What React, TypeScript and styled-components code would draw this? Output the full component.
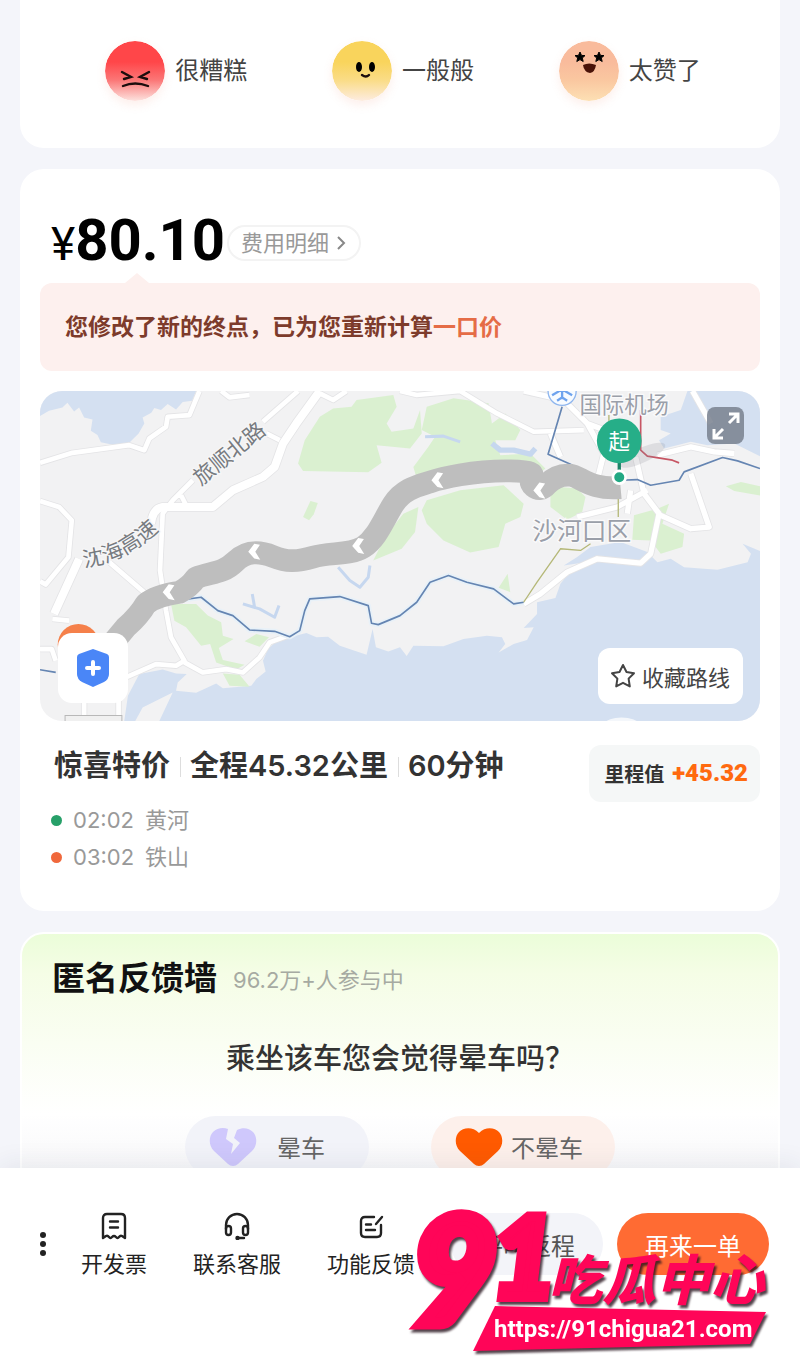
import React from "react";
import styled, { createGlobalStyle } from "styled-components";

const GlobalStyle = createGlobalStyle`
  * {
    box-sizing: border-box;
  }
  body {
    margin: 0;
    background: #f4f5fa;
    color: #333;
    font-family: Inter, "Noto Sans CJK SC", sans-serif;
  }
  button {
    border: 0;
    padding: 0;
    background: none;
    color: inherit;
    font: inherit;
    cursor: pointer;
  }
  h2, p, ul {
    margin: 0;
    padding: 0;
  }
`;

const Screen = styled.div`
  height: 100vh;
  display: flex;
  flex-direction: column;
`;

const Content = styled.main`
  flex: 1;
  min-height: 0;
  padding: 0 20px;
  display: flex;
  flex-direction: column;
  gap: 21px;
  overflow-y: auto;
  scrollbar-width: none;
`;

const Card = styled.section`
  flex: none;
  padding: 38px 20px 35px;
  border-radius: 24px;
  background: #fff;
`;

/* ---------- rating ---------- */
const RatingCard = styled(Card)`
  padding: 41px 37px 47px 43px;
  border-radius: 0 0 24px 24px;
  display: grid;
  grid-template-columns: repeat(3, 1fr);
`;

const RatingButton = styled.button`
  display: flex;
  align-items: center;
  justify-content: center;
  gap: 10px;
  font-size: 24px;
  line-height: 60px;
  color: #444;
  svg {
    border-radius: 50%;
    box-shadow: 0 4px 10px rgba(240, 150, 120, 0.15);
  }
`;

/* ---------- price ---------- */
const PriceRow = styled.div`
  padding: 0 11px;
  display: flex;
  align-items: flex-end;
  gap: 2px;
`;

const Price = styled.p`
  display: flex;
  align-items: baseline;
  font-family: Roboto, sans-serif;
  font-size: 58px;
  line-height: 66px;
  font-weight: 700;
  color: #000;
  small {
    font-size: 46px;
    line-height: 50px;
    font-weight: 400;
  }
`;

const DetailButton = styled.button`
  height: 36px;
  margin-bottom: 12px;
  padding: 0 12px;
  display: flex;
  align-items: center;
  gap: 6px;
  border: 2px solid #f3f3f3;
  border-radius: 18px;
  font-size: 22px;
  line-height: 32px;
  color: #999;
`;

const Notice = styled.p`
  position: relative;
  margin-top: 10px;
  padding: 0 25px;
  border-radius: 12px;
  background: #fdf0ee;
  font-size: 23px;
  line-height: 88px;
  font-weight: 700;
  color: #7d3b2b;
  &::before {
    content: "";
    position: absolute;
    left: 85px;
    top: -10px;
    border: 12px solid transparent;
    border-top-width: 0;
    border-bottom: 10px solid #fdf0ee;
  }
  em {
    font-style: normal;
    color: #e56c46;
  }
`;

/* ---------- map ---------- */
const MapBox = styled.div`
  position: relative;
  margin-top: 20px;
  border-radius: 22px;
  overflow: hidden;
  > svg {
    display: block;
    width: 100%;
  }
`;

const MapButton = styled.button`
  position: absolute;
  display: flex;
  align-items: center;
  justify-content: center;
  background: #fff;
`;

const SafetyButton = styled(MapButton)`
  left: 18px;
  bottom: 18px;
  width: 70px;
  height: 70px;
  border-radius: 14px;
`;

const ExpandButton = styled(MapButton)`
  right: 16px;
  top: 16px;
  width: 37px;
  height: 37px;
  border-radius: 8px;
  background: rgba(120, 128, 142, 0.85);
`;

const FavouriteButton = styled(MapButton)`
  right: 17px;
  bottom: 17px;
  height: 56px;
  padding: 0 13px 0 12px;
  gap: 6px;
  border-radius: 12px;
  font-size: 22px;
  color: #444;
`;

/* ---------- trip ---------- */
const TripRow = styled.div`
  margin-top: 24px;
  padding-left: 14px;
  display: flex;
  justify-content: space-between;
`;

const TripSummary = styled.ul`
  display: flex;
  list-style: none;
  font-size: 29px;
  line-height: 42px;
  font-weight: 600;
  li + li {
    margin-left: 10px;
    padding-left: 10px;
    background: linear-gradient(#ddd, #ddd) 0 12px / 1px 20px no-repeat;
  }
`;

const Mileage = styled.p`
  height: 57px;
  padding: 0 12px 0 15px;
  display: flex;
  align-items: center;
  gap: 8px;
  border-radius: 12px;
  background: #f5f7f7;
  font-size: 20px;
  font-weight: 700;
  strong {
    font-family: Roboto, sans-serif;
    font-size: 24px;
    font-weight: 900;
    color: #ff6a10;
  }
`;

const Stops = styled.ul`
  padding-left: 11px;
  list-style: none;
  font-size: 22px;
  line-height: 37px;
  color: #999;
  li {
    display: flex;
    align-items: center;
    gap: 11px;
  }
`;

const Dot = styled.i<{ $color: string }>`
  width: 11px;
  height: 11px;
  border-radius: 50%;
  background: ${({ $color }) => $color};
`;

/* ---------- feedback ---------- */
const FeedbackCard = styled(Card)`
  padding: 20px 30px 40px;
  border: 2px solid #fff;
  background: linear-gradient(#ebfdd9, #f5fde6 40px, #fff 180px, #f8f8fa 234px);
`;

const FeedbackTitle = styled.div`
  display: flex;
  align-items: center;
  gap: 16px;
  font-size: 22px;
  color: #a6aaa2;
  h2 {
    font-size: 33px;
    line-height: 48px;
    font-weight: 700;
    color: #111;
  }
`;

const Question = styled.p`
  margin-top: 35px;
  font-size: 29px;
  line-height: 44px;
  font-weight: 500;
  text-align: center;
`;

const Answers = styled.div`
  margin-top: 35px;
  display: flex;
  justify-content: center;
  gap: 62px;
`;

const Answer = styled.button<{ $tint: string; $gap: number }>`
  width: 184px;
  height: 62px;
  padding-left: 24px;
  display: flex;
  align-items: center;
  gap: ${({ $gap }) => $gap}px;
  border-radius: 31px;
  background: ${({ $tint }) => $tint};
  font-size: 24px;
  color: #666;
`;

/* ---------- bottom bar ---------- */
const BottomBar = styled.footer`
  position: relative;
  flex: none;
  padding: 40px 31px 85px;
  display: flex;
  align-items: center;
  justify-content: space-between;
  background: #fff;
  box-shadow: 0 -4px 24px rgba(40, 50, 80, 0.08);
`;

const Tools = styled.nav`
  padding-top: 4px;
  display: flex;
  align-items: center;
  gap: 46px;
`;

const MoreButton = styled.button`
  width: 24px;
  height: 60px;
  margin-right: -20px;
`;

const Tool = styled.button`
  display: flex;
  flex-direction: column;
  align-items: center;
  gap: 8px;
  font-size: 22px;
  line-height: 32px;
  color: #222;
`;

const Actions = styled.div`
  display: flex;
  gap: 14px;
`;

const Action = styled.button<{ $primary?: boolean }>`
  width: 152px;
  height: 62px;
  border-radius: 31px;
  background: ${({ $primary }) => ($primary ? "#ff6b33" : "#f3f4f9")};
  color: ${({ $primary }) => ($primary ? "#fff" : "#555")};
  font-size: 24px;
`;

const SiteBadge = styled.svg`
  position: absolute;
  right: 20px;
  bottom: 6px;
  pointer-events: none;
  filter: drop-shadow(2px 3px 1px rgba(40, 20, 30, 0.8));
`;

const ink = { fill: "none", stroke: "#1c0d0d", strokeWidth: 2.4, strokeLinecap: "round" as const };

interface FaceProps {
  id: string;
  from: string;
  mid: string;
  to: string;
  children: React.ReactNode;
}
const Face: React.FC<FaceProps> = ({ id, from, mid, to, children }) => (
  <svg width="60" height="60" viewBox="0 0 60 60" aria-hidden="true">
    <linearGradient id={id} x1="0" y1="0" x2="0" y2="1">
      <stop offset="0.35" stopColor={from} />
      <stop offset="0.65" stopColor={mid} />
      <stop offset="1" stopColor={to} />
    </linearGradient>
    <circle cx="30" cy="30" r="30" fill={`url(#${id})`} />
    {children}
  </svg>
);

const star = "M0-5 1.5-1.6 5-1.4 2.3 1 3.2 4.5 0 2.6-3.2 4.5-2.3 1-5-1.4-1.5-1.6Z";

const ROUTE =
  "M215 830 290 740Q330 705 350 670 380 645 450 635 480 620 500 592C540 575 580 580 615 545S690 512 730 528 800 545 850 530 960 525 1000 500 1060 420 1090 372 1170 315 1200 305 1330 270 1440 272 1480 290 1510 318Q1530 335 1550 312C1570 292 1590 282 1620 285S1680 330 1770 322";

const RouteMap = () => (
  <svg viewBox="33 33 2154 987" role="img" aria-label="路线地图">
    <path fill="#f2f2f3" d="M33 33H2187V1020H33Z" />
    <g fill="#d4e0f1">
      <path d="M33 33H500L488 62 460 66 440 88 415 72 395 90 375 84 366 98 340 112 345 130 328 160 300 188 262 196 215 186 205 165 185 152 190 118 165 112 150 82 135 94 115 68 100 82 60 92 33 108Z" />
      <path d="M285 1020 296 945 330 880 400 866 440 878 472 880 445 905 440 930 500 936 560 908 580 922 665 915 680 895 708 872 700 840 715 805 745 778 830 757 860 770 895 768 930 795 1010 822 1028 745 1038 800 1075 812 1110 800 1130 826 1150 795 1240 797 1300 775 1370 765 1415 770 1425 790 1405 815 1450 790 1490 778 1510 740 1480 742 1520 700 1520 665 1575 652 1590 610 1610 585 1665 545 1600 555 1640 530 1680 500 1770 485 1850 515 1880 545 1920 535 1960 560 2060 568 2150 545 2160 520 2135 490 2187 512V1020H390L430 935 340 980 318 1020Z" />
      <path d="M1970 33H2187V228L2110 190 2030 195 1980 185 1900 205 1885 180 1920 160 1890 150 1890 110 1950 90Z" />
    </g>
    <g fill="#daf0d0">
      <path d="M820 272 805 250 825 180 870 110 910 85 965 80 980 60 1090 45 1100 80 1070 130 1085 155 1150 145 1170 90 1175 160 1140 205 1040 195 1055 248 1015 276Z" />
      <path d="M1190 80 1270 55 1375 70 1385 130 1425 100 1470 150 1455 180 1395 180 1410 225 1500 220 1545 265 1500 300 1160 295 1150 260 1195 200 1215 170 1175 150Z" />
      <path d="M1175 390 1190 360 1290 330 1420 315 1480 370 1470 410 1425 430 1405 500 1320 516 1240 480 1190 430Z" />
      <path d="M1030 540 1065 470 1120 400 1165 380 1155 455 1115 505Z" />
      <path d="M1560 340 1590 320 1640 325 1665 350 1655 395 1610 418 1560 380Z" />
      <path d="M1810 405 1880 385 1915 370 1895 430 1960 460 1955 500 1890 520 1860 480 1805 478Z" />
      <path d="M2085 318 2130 305 2187 318V346L2110 332Z" />
      <path d="M820 410 842 362 864 368 852 402 838 420Z" />
      <path d="M425 670 500 670 535 705 575 725 580 765 612 775 568 802 580 838 645 852 620 866 560 845 542 790 515 795 470 740 435 720Z" />
      <path d="M645 782 680 760 718 770 690 798ZM580 878 630 882 660 918 600 915ZM1405 622 1432 580 1440 635Z" />
    </g>
    <g fill="none" stroke="#c6d7ef" strokeWidth="9" strokeLinejoin="round">
      <path d="M925 560 960 600 990 620 1015 590 1020 555M640 670 690 685 735 710 748 675M668 640 675 680M1185 170 1240 168 1290 185" />
      <path strokeWidth="16" d="M1385 190 1410 210 1450 210 1500 222 1515 205" />
    </g>
    {[
      { stroke: "#e4e4e6", extra: 5 },
      { stroke: "#fff", extra: 0 },
    ].map(({ stroke, extra }) => (
      <g key={stroke} fill="none" stroke={stroke} strokeLinejoin="round">
        <path
          strokeWidth={24 + extra}
          d="M870 33 800 130 760 190 735 260 700 290 610 330 550 380H400Q370 385 365 430M150 535 75 700"
        />
        <path
          strokeWidth={14 + extra}
          d="M33 248 130 218 300 195 345 210 360 175 410 140 415 110 480 105 510 33M33 362 90 380 128 420 118 530 50 612 33 602M805 33 700 125M490 300 430 360 400 400 392 570 410 690 425 770 465 840 440 855 380 850 290 890M455 345 470 375M240 545 350 640M70 715 120 720M710 160 750 180M465 845 520 875 590 865 640 875 690 830 720 785 775 765M575 33 600 52 660 45M870 40 910 60 950 33M1110 33 1160 45 1290 33 1400 100 1510 155 1660 150M33 805 68 805 80 840M165 960V1020M268 960V1010"
        />
        <path
          strokeWidth={16 + extra}
          d="M1480 33 1600 60 1670 130 1720 220 1700 300M1670 130 1750 160M1815 230 1840 340 1885 400 1860 520 1830 548 1700 535 1610 575 1530 640 1480 670M1985 33 2040 130M1880 225 1980 200 2050 215 2110 220M1980 280 2035 440 1980 445 1890 405M1850 330 1760 380 1680 400 1640 410M1800 330 1790 400M1560 160 1590 230"
        />
      </g>
    ))}
    <g fill="none" strokeLinejoin="round">
      <path
        stroke="#e8f1f8"
        strokeWidth="16"
        d="M440 660 515 650 565 690 610 705 660 748 735 752 780 768 810 750 825 690 840 655 930 648 1015 675 1025 728 1045 732 1110 705 1160 665 1200 605 1255 585 1310 605 1390 625 1450 670 1480 665"
      />
      <path
        stroke="#6585b2"
        strokeWidth="5"
        d="M33 867 80 875M440 660 515 650 565 690 610 705 660 748 735 752 780 768 810 750 825 690 840 655 930 648 1015 675 1025 728 1045 732 1110 705 1160 665 1200 605 1255 585 1310 605 1390 625 1450 670 1480 665M1595 80 1553 222 1620 252 1700 300M1770 300 1820 298 1860 315 1945 300 1960 275 2075 232 2120 242 2187 265"
      />
      <path stroke="#b5b878" strokeWidth="4" d="M1480 665 1520 605 1590 505 1650 510 1680 490M1735 105V140M1763 340V410" />
      <path stroke="#c75664" strokeWidth="5" d="M1830 90V210L1850 228 1925 240 1945 248" />
    </g>
    <circle cx="148" cy="792" r="62" fill="#f5804a" />
    <path d={ROUTE} fill="none" stroke="#bebebe" strokeWidth="68" strokeLinejoin="round" />
    <g fill="#fff">
      {[
        [418, 635],
        [674, 514],
        [985, 497],
        [1222, 300],
        [1527, 331],
      ].map(([x, y]) => (
        <path key={x} transform={`translate(${x} ${y})`} d="M-18 0 0-24 17-21 3 0 18 24 0 20Z" />
      ))}
    </g>
    <path d="M108 1020V1004H278V1020" fill="#f0f0f0" stroke="#b8b8b8" strokeWidth="3" />
    <g fill="#777b80" fontSize="64" stroke="#f6f6f7" strokeWidth="8" paintOrder="stroke">
      <text transform="translate(514 318) rotate(-39)">旅顺北路</text>
      <path id="highway" d="M165 560Q300 545 405 432" stroke="none" fill="none" />
      <text>
        <textPath href="#highway">沈海高速</textPath>
      </text>
    </g>
    <circle cx="1595" cy="34" r="42" fill="#f7fbff" stroke="#8fb6ee" strokeWidth="4" />
    <path d="M1595 20V58M1565 46 1595 28 1625 46M1580 62 1595 52 1610 62" fill="none" stroke="#6ea3ee" strokeWidth="7" />
    <g fill="#9a9fa9" stroke="#fafafb" strokeWidth="8" paintOrder="stroke">
      <text x="1647" y="98" fontSize="67">国际机场</text>
      <text x="1506" y="480" fontSize="74">沙河口区</text>
    </g>
    <ellipse cx="1835" cy="225" rx="75" ry="22" fill="#8a8d96" opacity="0.2" transform="rotate(-25 1835 225)" />
    <path d="M1766 240V290" stroke="#1c8468" strokeWidth="10" />
    <circle cx="1766" cy="291" r="19" fill="#21a883" stroke="#fff" strokeWidth="8" />
    <circle cx="1766" cy="182" r="67" fill="#26ae88" />
    <text x="1766" y="207" fontSize="64" textAnchor="middle" fill="#fff">起</text>
    <ellipse cx="1773" cy="1026" rx="48" ry="16" fill="#f4f7fb" />
  </svg>
);

const stroke = {
  width: 28,
  height: 28,
  viewBox: "0 0 28 28",
  fill: "none",
  stroke: "#222",
  strokeWidth: 2.4,
  strokeLinecap: "round" as const,
  strokeLinejoin: "round" as const,
};

const InvoiceIcon = () => (
  <svg {...stroke}>
    <path d="M3 26V6Q3 2 7 2H21Q25 2 25 6V26L22 24Q20.500 23 19 25 17.500 27 16 25 14 23 12 25 10.500 27 9 25 7.500 23 6 24ZM10 9.500H18M10 15.500H18" />
  </svg>
);

const ServiceIcon = () => (
  <svg {...stroke}>
    <path d="M3 17V13A11 11 0 0 1 25 13V17M15 26H21" />
    <rect x="3" y="14" width="5" height="9" rx="2.500" />
    <rect x="20" y="14" width="5" height="9" rx="2.500" />
    <circle cx="14.500" cy="26" r="1" fill="#222" />
  </svg>
);

const EditIcon = () => (
  <svg {...stroke}>
    <path d="M17 5H8Q4 5 4 9V21Q4 25 8 25H20Q24 25 24 21V13M25 5 19 12M9 12.500H14M9 18H18" />
  </svg>
);

const App = () => {
  return (
    <Screen>
      <GlobalStyle />
      <Content>
        <RatingCard>
          <RatingButton>
            <Face id="bad" from="#ff4649" mid="#fb7676" to="#fde3df">
              <path {...ink} d="M17 31 26 36 19 38M44 31 35 36 42 38M18 45Q30 40 43 45" />
            </Face>
            很糟糕
          </RatingButton>
          <RatingButton>
            <Face id="fair" from="#f9d45c" mid="#fadc86" to="#fdece0">
              <ellipse cx="27" cy="26" rx="3" ry="5" />
              <ellipse cx="40" cy="26" rx="3" ry="5" />
              <path {...ink} d="M30 34Q34 37 37 34" />
            </Face>
            一般般
          </RatingButton>
          <RatingButton>
            <Face id="great" from="#f9bb9c" mid="#fac7a0" to="#fde0b4">
              <path transform="translate(21 16)" d={star} stroke="#000" />
              <path transform="translate(40 16)" d={star} stroke="#000" />
              <path d="M24 24Q30 21 37 24 36 31 31 32 25 31 24 24Z" fill="#4a1208" />
            </Face>
            太赞了
          </RatingButton>
        </RatingCard>

        <Card>
          <PriceRow>
            <Price>
              <small>¥</small>80.10
            </Price>
            <DetailButton>
              费用明细
              <svg width="12" height="16" viewBox="0 0 12 16" fill="none" stroke="#888" strokeWidth="2">
                <path d="M3 2 9 8 3 14" />
              </svg>
            </DetailButton>
          </PriceRow>
          <Notice>
            您修改了新的终点，已为您重新计算<em>一口价</em>
          </Notice>
          <MapBox>
            <RouteMap />
            <ExpandButton aria-label="展开地图">
              <svg width="30" height="30" viewBox="0 0 30 30" fill="none" stroke="#fff" strokeWidth="3">
                <path d="M18 3H27V12M27 3 18 12M3 18V27H12M3 27 12 18" />
              </svg>
            </ExpandButton>
            <SafetyButton aria-label="安全中心">
              <svg width="34" height="40" viewBox="0 0 34 40">
                <path d="M17 1 31 6Q33 7 33 9V26Q33 31 28 34L17 39 6 34Q1 31 1 26V9Q1 7 3 6Z" fill="#4a86f7" />
                <path d="M17 14V26M11 20H23" stroke="#fff" strokeWidth="4" strokeLinecap="round" />
              </svg>
            </SafetyButton>
            <FavouriteButton>
              <svg width="26" height="26" viewBox="0 0 26 26" fill="none" stroke="#444" strokeWidth="2" strokeLinejoin="round">
                <path d="M13 2 16.500 9 24 10.200 18.600 15.600 19.800 23.400 13 19.800 6.200 23.400 7.400 15.600 2 10.200 9.500 9Z" />
              </svg>
              收藏路线
            </FavouriteButton>
          </MapBox>
          <TripRow>
            <TripSummary>
              <li>惊喜特价</li>
              <li>全程45.32公里</li>
              <li>60分钟</li>
            </TripSummary>
            <Mileage>
              里程值 <strong>+45.32</strong>
            </Mileage>
          </TripRow>
          <Stops>
            <li>
              <Dot $color="#27a069" />
              <span>02:02</span>
              <span>黄河</span>
            </li>
            <li>
              <Dot $color="#f0683c" />
              <span>03:02</span>
              <span>铁山</span>
            </li>
          </Stops>
        </Card>

        <FeedbackCard>
          <FeedbackTitle>
            <h2>匿名反馈墙</h2>
            <span>96.2万+人参与中</span>
          </FeedbackTitle>
          <Question>乘坐该车您会觉得晕车吗？</Question>
          <Answers>
            <Answer $tint="#f2f3f9" $gap={20}>
              <svg width="48" height="40" viewBox="0 0 48 40">
                <path
                  d="M24 39Q21 39 19 37L5 24C-1 18 0 9 4 5S14 0 19 2L17 12 24 17 22 27 31 16 25 11 28 3C34 0 40 1 44 5S49 18 43 24L29 37Q27 39 24 39Z"
                  fill="#cfc8fc"
                />
              </svg>
              晕车
            </Answer>
            <Answer $tint="#fdf0eb" $gap={8}>
              <svg width="48" height="40" viewBox="0 0 48 40">
                <path d="M24 39Q21 39 19 37L5 24C-1 18 0 9 4 5S17-1 24 6C31-1 40 1 44 5S49 18 43 24L29 37Q27 39 24 39Z" fill="#ff5a00" />
              </svg>
              不晕车
            </Answer>
          </Answers>
        </FeedbackCard>
      </Content>

      <BottomBar>
        <Tools>
          <MoreButton aria-label="更多">
            <svg width="24" height="24" viewBox="0 0 24 24" fill="#222">
              <circle cx="12" cy="3" r="3" />
              <circle cx="12" cy="12" r="3" />
              <circle cx="12" cy="21" r="3" />
            </svg>
          </MoreButton>
          <Tool>
            <InvoiceIcon />
            开发票
          </Tool>
          <Tool>
            <ServiceIcon />
            联系客服
          </Tool>
          <Tool>
            <EditIcon />
            功能反馈
          </Tool>
        </Tools>
        <Actions>
          <Action>呼叫返程</Action>
          <Action $primary>再来一单</Action>
        </Actions>
        <SiteBadge width="380" height="156" viewBox="400 1203 380 156">
          <g fill="#ff0558" stroke="#ff0558" fontStyle="italic" fontWeight="900">
            <text x="412" y="1323" fontSize="146" strokeWidth="12" fontFamily="Lato, sans-serif">9</text>
            <text x="492" y="1297" fontSize="110" strokeWidth="10" fontFamily="Lato, sans-serif">1</text>
            <text x="548" y="1300" fontSize="54" stroke="none" fontFamily='"Noto Sans CJK SC", sans-serif'>
              吃瓜中心
            </text>
            <path d="M495 1306 766 1312 750 1344 473 1351Z" stroke="none" />
          </g>
          <text x="494" y="1337" fontSize="24" fontWeight="700" fill="#fff" fontFamily="Roboto, sans-serif">
            https://91chigua21.com
          </text>
        </SiteBadge>
      </BottomBar>
    </Screen>
  );
};

export default App;
